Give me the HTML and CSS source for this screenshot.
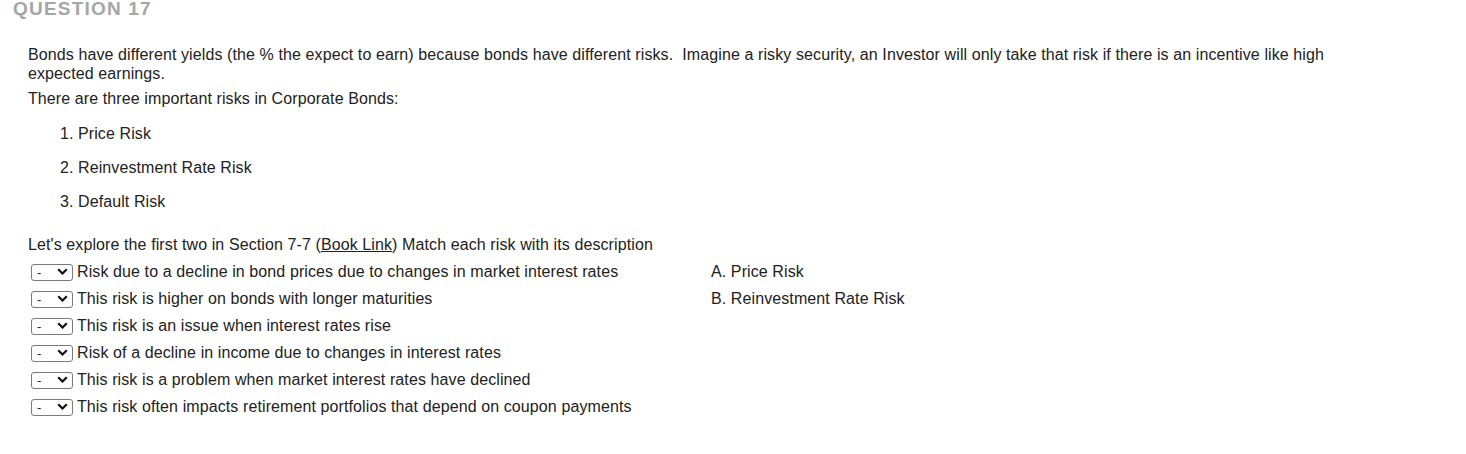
FILE: index.html
```html
<!DOCTYPE html>
<html>
<head>
<meta charset="utf-8">
<link rel="stylesheet" href="styles.css">
</head>
<body>
<h2 class="qtitle">QUESTION 17</h2>
<div class="qbody">
  <p class="intro">Bonds have different yields (the % the expect to earn) because bonds have different risks.&nbsp; Imagine a risky security, an Investor will only take that risk if there is an incentive like high expected earnings.</p>
  <p class="lead">There are three important risks in Corporate Bonds:</p>
  <ol class="risks">
    <li>Price Risk</li>
    <li>Reinvestment Rate Risk</li>
    <li>Default Risk</li>
  </ol>
  <p class="explore">Let's explore the first two in Section 7-7 (<a class="book" href="#">Book Link</a>) Match each risk with its description</p>
  <div class="match">
    <div class="items">
      <div class="row"><span class="sel"><select><option>-</option></select><svg class="chev" viewBox="0 0 11 7" width="11" height="7"><path d="M1.2 1.2 L5.5 5.5 L9.8 1.2" fill="none" stroke="#111" stroke-width="2.2"/></svg></span><span class="txt">Risk due to a decline in bond prices due to changes in market interest rates</span></div>
      <div class="row"><span class="sel"><select><option>-</option></select><svg class="chev" viewBox="0 0 11 7" width="11" height="7"><path d="M1.2 1.2 L5.5 5.5 L9.8 1.2" fill="none" stroke="#111" stroke-width="2.2"/></svg></span><span class="txt">This risk is higher on bonds with longer maturities</span></div>
      <div class="row"><span class="sel"><select><option>-</option></select><svg class="chev" viewBox="0 0 11 7" width="11" height="7"><path d="M1.2 1.2 L5.5 5.5 L9.8 1.2" fill="none" stroke="#111" stroke-width="2.2"/></svg></span><span class="txt">This risk is an issue when interest rates rise</span></div>
      <div class="row"><span class="sel"><select><option>-</option></select><svg class="chev" viewBox="0 0 11 7" width="11" height="7"><path d="M1.2 1.2 L5.5 5.5 L9.8 1.2" fill="none" stroke="#111" stroke-width="2.2"/></svg></span><span class="txt">Risk of a decline in income due to changes in interest rates</span></div>
      <div class="row"><span class="sel"><select><option>-</option></select><svg class="chev" viewBox="0 0 11 7" width="11" height="7"><path d="M1.2 1.2 L5.5 5.5 L9.8 1.2" fill="none" stroke="#111" stroke-width="2.2"/></svg></span><span class="txt">This risk is a problem when market interest rates have declined</span></div>
      <div class="row"><span class="sel"><select><option>-</option></select><svg class="chev" viewBox="0 0 11 7" width="11" height="7"><path d="M1.2 1.2 L5.5 5.5 L9.8 1.2" fill="none" stroke="#111" stroke-width="2.2"/></svg></span><span class="txt">This risk often impacts retirement portfolios that depend on coupon payments</span></div>
    </div>
    <div class="answers">
      <div class="arow">A. Price Risk</div>
      <div class="arow">B. Reinvestment Rate Risk</div>
    </div>
  </div>
</div>
</body>
</html>
```
FILE: styles.css
```css
html, body {
  margin: 0;
  padding: 0;
  background: #fff;
}
body {
  font-family: "Liberation Sans", Arial, sans-serif;
  color: #222;
  font-size: 16px;
  letter-spacing: 0.1px;
}
.qtitle {
  margin: 0;
  padding-left: 13px;
  font-size: 19px;
  line-height: 17px;
  font-weight: bold;
  letter-spacing: 1.2px;
  color: #a6a6a6;
}
.qbody {
  padding-left: 28px;
  padding-top: 28px;
  width: 1320px;
}
.intro {
  margin: 0;
  line-height: 19px;
}
.lead {
  margin: 6px 0 0 0;
  line-height: 19px;
}
.risks {
  margin: 16px 0 0 0;
  padding-left: 50px;
}
.risks li {
  line-height: 19px;
  margin-bottom: 15px;
}
.risks li:last-child {
  margin-bottom: 0;
}
.explore {
  margin: 24px 0 0 0;
  line-height: 19px;
}
.book {
  color: #222;
  text-decoration: underline;
}
.match {
  display: flex;
  margin-top: 4px;
}
.items {
  width: 683px;
}
.row, .arow {
  height: 27px;
  display: flex;
  align-items: center;
}
.sel {
  position: relative;
  display: inline-block;
  margin-left: 3px;
  width: 42px;
  height: 17px;
  margin-right: 4px;
}
.sel select {
  -webkit-appearance: none;
  appearance: none;
  width: 42px;
  height: 17px;
  box-sizing: border-box;
  border: 1px solid #7a7a7a;
  border-radius: 3px;
  background: #fff;
  font-family: "Liberation Sans", Arial, sans-serif;
  font-size: 13px;
  color: #222;
  padding: 0 0 0 5px;
  margin: 0;
  line-height: 15px;
}
.chev {
  position: absolute;
  left: 26px;
  top: 5px;
  pointer-events: none;
}
.txt {
  line-height: 19px;
}
```
